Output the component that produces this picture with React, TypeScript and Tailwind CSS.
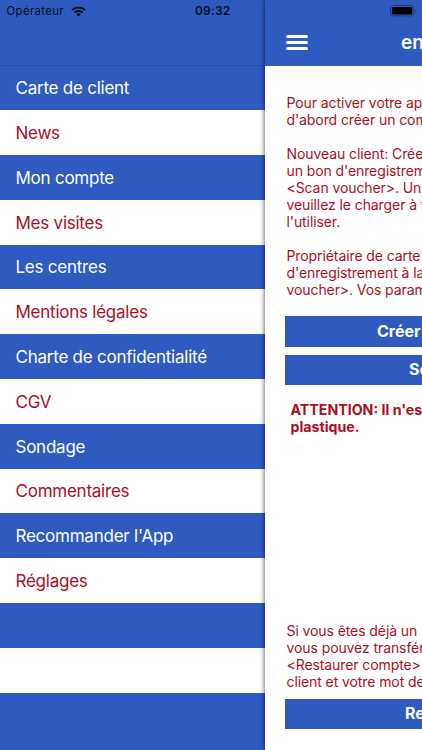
import { clsx } from "clsx";
import React from "react";

const menuItems = [
  "Carte de client",
  "News",
  "Mon compte",
  "Mes visites",
  "Les centres",
  "Mentions légales",
  "Charte de confidentialité",
  "CGV",
  "Sondage",
  "Commentaires",
  "Recommander l'App",
  "Réglages",
  "",
  "",
  "",
];

const WifiIcon = () => (
  <svg width="15" height="11" viewBox="0 0 15 11" fill="none" stroke="#050d22">
    <path d="M1 4.1a9.2 9.2 0 0 1 13 0" strokeWidth="2" />
    <path d="M3.4 6.6a5.8 5.8 0 0 1 8.2 0" strokeWidth="2" />
    <path d="M7.5 10.6 5.3 8.3a3.1 3.1 0 0 1 4.4 0z" fill="#050d22" stroke="none" />
  </svg>
);

const BatteryIcon = () => (
  <svg width="27" height="12" viewBox="0 0 27 12">
    <rect x="0.6" y="0.6" width="23" height="10.3" rx="2.6" fill="none" stroke="#1b3672" />
    <rect x="2" y="2" width="20.2" height="7.5" rx="1.2" fill="#000" />
    <path d="M24.8 4a2 2 0 0 1 0 3.6z" fill="#1b3672" />
  </svg>
);

const Sidebar = () => {
  return (
    <aside className="flex w-[265px] shrink-0 flex-col bg-[#2f5bc1]">
      <header className="h-[65.4px] shrink-0">
        <div className="flex h-[22px] items-center pl-[6.5px] text-[11.4px] text-[#050d22]">
          <span className="w-[64px] pt-px tracking-[0.35px]">Opérateur</span>
          <WifiIcon />
          <span className="ml-[109.5px] text-[12px] font-semibold tracking-[0.2px]">09:32</span>
        </div>
      </header>
      <nav>
        <ul>
          {menuItems.map((item, i) => (
            <li
              key={i}
              className={clsx(
                "flex h-[44.8px] items-center pl-[15.5px] text-[17px] tracking-[-0.24px] whitespace-nowrap",
                i === 0 ? "border-t border-[#2950ab] pt-px" : "pt-[2.2px]",
                i % 2 === 0 ? "bg-[#2f5bc1] text-white" : "bg-white text-[#a90f24]"
              )}
            >
              {item}
            </li>
          ))}
        </ul>
      </nav>
    </aside>
  );
};

const ActionButton = ({ label, className }: { label: string; className: string }) => (
  <button
    className={clsx(
      "block h-[30.5px] w-[300px] bg-[#2f5bc1] text-left text-[16px] font-bold text-white",
      className
    )}
  >
    {label}
  </button>
);

const Paragraph = ({ lines }: { lines: string[] }) => (
  <p className="pl-[1.5px] tracking-[-0.09px]">
    {lines.map((line) => (
      <span key={line} className="block">
        {line}
      </span>
    ))}
  </p>
);

const Content = () => {
  return (
    <main className="z-10 flex w-[375px] shrink-0 flex-col bg-white shadow-[0_0_5px_rgba(0,0,0,0.75)]">
      <header className="h-[65.5px] shrink-0 bg-[#2f5bc1]">
        <div className="flex h-[22px] items-center pl-[125px]">
          <BatteryIcon />
        </div>
        <div className="flex h-[41px] items-center pl-[21px]">
          <button aria-label="Menu" className="flex w-[22px] flex-col gap-[3px]">
            <span className="h-[3px] rounded-full bg-white" />
            <span className="h-[3px] rounded-full bg-white" />
            <span className="h-[3px] rounded-full bg-white" />
          </button>
          <h1 className="ml-[93px] pt-0.5 text-[19px] font-semibold text-white">en</h1>
        </div>
      </header>
      <section className="flex flex-col pl-5 text-[14px] leading-[17.05px] whitespace-nowrap text-[#a90f24]">
        <div className="flex h-[250.5px] flex-col gap-[17px] pt-[28px]">
          <Paragraph lines={["Pour activer votre ap", "d'abord créer un com"]} />
          <Paragraph
            lines={[
              "Nouveau client: Crée",
              "un bon d'enregistrem",
              "<Scan voucher>. Une",
              "veuillez le charger à v",
              "l'utiliser.",
            ]}
          />
          <Paragraph
            lines={["Propriétaire de carte", "d'enregistrement à la", "voucher>. Vos param"]}
          />
        </div>
        <ActionButton label="Créer" className="pl-[92px]" />
        <ActionButton label="Sc" className="mt-2 pl-[124px]" />
        <p className="mt-[16px] h-[220.5px] pl-[5.5px] text-[14.2px] font-bold">
          ATTENTION: Il n'es
          <br />
          plastique.
        </p>
        <Paragraph
          lines={[
            "Si vous êtes déjà un",
            "vous pouvez transfér",
            "<Restaurer compte>",
            "client et votre mot de",
          ]}
        />
        <ActionButton label="Re" className="mt-[9px] pl-[120px]" />
      </section>
    </main>
  );
};

export default function App() {
  return (
    <div className="flex h-[750px] w-[422px] overflow-hidden bg-white font-['Inter','Liberation_Sans',sans-serif]">
      <Sidebar />
      <Content />
    </div>
  );
}
